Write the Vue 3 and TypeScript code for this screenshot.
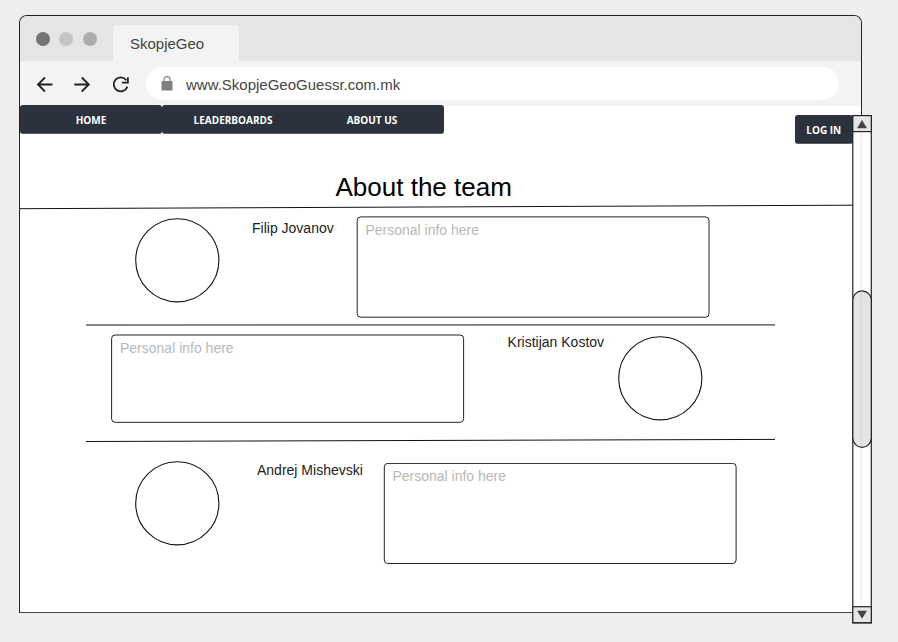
<script setup lang="ts">
interface Member {
  name: string
  key: string
  width: number
  height: number
  fx: number
  fy: number
}

const navItems: string[] = ['HOME', 'LEADERBOARDS', 'ABOUT US']

const members: Member[] = [
  { name: 'Filip Jovanov', key: 'first', width: 351.8, height: 100.3, fx: 1.2, fy: 0.9 },
  { name: 'Kristijan Kostov', key: 'second', width: 352, height: 87.3, fx: 0.6, fy: 1 },
  { name: 'Andrej Mishevski', key: 'third', width: 351.8, height: 100.1, fx: 1.3, fy: 0.4 },
]
</script>

<template>
  <div class="page">
    <div class="window">
      <div class="titlebar">
        <span class="dot dark"></span>
        <span class="dot light"></span>
        <span class="dot mid"></span>
        <div class="tab">SkopjeGeo</div>
      </div>
      <div class="toolbar">
        <svg class="controls" width="110" height="44" viewBox="0 0 110 44" fill="none" stroke="#222" stroke-width="1.8">
          <path d="M32.5 23.5H18.2M25 16.5L18 23.5L25 30.5" />
          <path d="M54.3 23.5H68.6M61.8 16.5L68.8 23.5L61.8 30.5" />
          <path d="M106.4 19.2A7 7 0 1 0 107.4 25.6" />
          <path d="M107.9 16.2V21.6H101.9" />
        </svg>
        <div class="address">
          <svg class="lock" width="12" height="15" viewBox="0 0 12 15">
            <path d="M3 6V3.6a3 3 0 0 1 6 0V6" fill="none" stroke="#808080" stroke-width="1.2" />
            <rect x="0.5" y="5" width="11" height="9.6" rx="1.2" fill="#808080" />
          </svg>
          <span>www.SkopjeGeoGuessr.com.mk</span>
        </div>
      </div>

      <div class="content">
        <header class="header">
          <nav class="nav">
            <button v-for="item in navItems" :key="item" class="btn nav-btn">{{ item }}</button>
          </nav>
          <button class="btn login">LOG IN</button>
        </header>
        <h1 class="title">About the team</h1>
        <svg class="rule" width="833" height="8" viewBox="0 0 833 8">
          <line x1="0" y1="4.7" x2="833" y2="1.2" stroke="#111" />
        </svg>

        <template v-for="(m, i) in members" :key="m.key">
          <section class="member" :class="m.key">
            <svg class="avatar" width="86" height="86" viewBox="0 0 86 86">
              <circle cx="43.3" cy="43.3" r="41.6" fill="none" stroke="#111" stroke-width="1.1" />
            </svg>
            <span class="name">{{ m.name }}</span>
            <div class="info">
              <svg class="frame" width="355" height="103">
                <rect :x="m.fx" :y="m.fy" :width="m.width" :height="m.height" rx="3.5" fill="none" stroke="#222" />
              </svg>
              <span class="hint">Personal info here</span>
            </div>
          </section>
          <svg v-if="i < 2" class="split" width="689" height="6" viewBox="0 0 689 6">
            <line x1="0" :y1="i === 0 ? 3 : 3.5" x2="689" :y2="i === 0 ? 2.9 : 1.4" stroke="#111" />
          </svg>
        </template>
      </div>
    </div>

    <svg class="scrollbar" width="20" height="510" viewBox="0 0 20 510" stroke="#222" stroke-width="1.2">
      <rect x="0.8" y="1.6" width="18.5" height="507.3" fill="#fff" />
      <path d="M9.1 17V492" stroke="#e9e9e9" stroke-width="1" />
      <rect x="0.8" y="1.6" width="18.5" height="16" fill="#e6e6e6" />
      <path d="M10 6L15 14.2H5Z" fill="#444" stroke="none" />
      <rect x="0.8" y="176.9" width="18.5" height="156.4" rx="9.2" fill="#e4e4e4" />
      <path d="M9.1 177.5V332.5" stroke="#d2d2d2" stroke-width="1" />
      <rect x="0.8" y="492.7" width="18.5" height="16" fill="#e6e6e6" />
      <path d="M5 496.8H15L10 504.8Z" fill="#444" stroke="none" />
    </svg>
  </div>
</template>

<style>
body {
  background: #eeeeee;
}
</style>

<style scoped>
.page {
  position: relative;
  box-sizing: border-box;
  width: 898px;
  height: 642px;
  padding: 15px 0 0 19px;
  overflow: hidden;
  background: #eeeeee;
  font-family: "Liberation Sans", Arial, sans-serif;
}
.window {
  box-sizing: border-box;
  width: 843px;
  height: 598px;
  border: 1px solid #222;
  border-bottom-color: #444;
  border-radius: 8px 8px 0 0;
  overflow: hidden;
  background: #fff;
}
.titlebar {
  display: flex;
  height: 45px;
  padding-left: 15.5px;
  background: #e5e5e5;
}
.dot {
  width: 14px;
  height: 14px;
  margin: 16.3px 9.7px 0 0;
  border-radius: 50%;
}
.dark { background: #757575; }
.light { background: #c4c4c4; }
.mid { background: #adadad; }
.tab {
  box-sizing: border-box;
  width: 126px;
  margin: 9px 0 0 6.2px;
  padding: 10px 0 0 17.2px;
  border-radius: 5px 5px 0 0;
  background: #f3f3f3;
  color: #444;
  font-size: 15px;
  line-height: 18px;
}
.toolbar {
  display: flex;
  height: 44.5px;
  background: #f3f3f3;
}
.controls { flex: none; }
.address {
  box-sizing: border-box;
  display: flex;
  width: 693px;
  height: 33px;
  margin: 6px 0 0 16px;
  padding: 9px 0 0 15px;
  border-radius: 17px;
  background: #fff;
  color: #444;
  font-size: 15px;
  line-height: 18px;
}
.lock { margin-right: 13px; }
.content {
  width: 833px;
  margin-top: -0.5px;
}
.header {
  display: flex;
  justify-content: space-between;
  height: 62px;
}
.nav {
  display: flex;
  width: 424px;
}
.btn {
  height: 29px;
  padding: 2px 0 0;
  border: 0;
  border-bottom: 1px solid #59616d;
  border-radius: 3px;
  background: #2b323d;
  color: #fff;
  font: 700 10px/26px "Open Sans", sans-serif;
}
.nav-btn {
  flex: none;
  width: 142px;
}
.nav-btn:nth-child(2) {
  border-radius: 3px 0 0 3px;
}
.nav-btn:nth-child(3) {
  width: 140px;
  border-radius: 0 3px 3px 0;
  padding-right: 4px;
}
.login {
  width: 58.5px;
  margin-top: 10px;
}
.title {
  margin: 0 0 0 315.5px;
  height: 37px;
  font-size: 26px;
  font-weight: 400;
  line-height: 40px;
  color: #000;
}
.rule {
  display: block;
}
.split {
  display: block;
  margin-left: 66px;
}
.member {
  display: flex;
  align-items: flex-start;
  height: 110px;
}
.avatar { flex: none; }
.name {
  color: #222;
  font-size: 14px;
  line-height: 16px;
  white-space: nowrap;
}
.info {
  display: grid;
  flex: none;
  width: 355px;
}
.frame,
.hint {
  grid-area: 1 / 1;
}
.hint {
  padding: 6px 0 0 9px;
  color: #b8b8b8;
  font-size: 14px;
  line-height: 16px;
}
.first .avatar { margin: 5px 0 0 114px; }
.first .name { width: 104px; margin: 8px 0 0 32px; }
.first .info { margin-top: 4px; }
.first .hint { padding-left: 9.4px; }
.second .info { order: 1; margin: 6px 0 0 91px; }
.second .name { order: 2; width: 109px; margin: 6px 0 0 41.6px; }
.second .avatar { order: 3; margin-top: 7px; }
.third { height: 150px; }
.third .avatar { margin: 16px 0 0 114px; }
.third .name { width: 126px; margin: 18px 0 0 37px; }
.third .info { margin-top: 19px; }
.third .hint { padding: 5px 0 0 9.4px; }
.scrollbar {
  position: absolute;
  left: 852px;
  top: 114px;
}
</style>
